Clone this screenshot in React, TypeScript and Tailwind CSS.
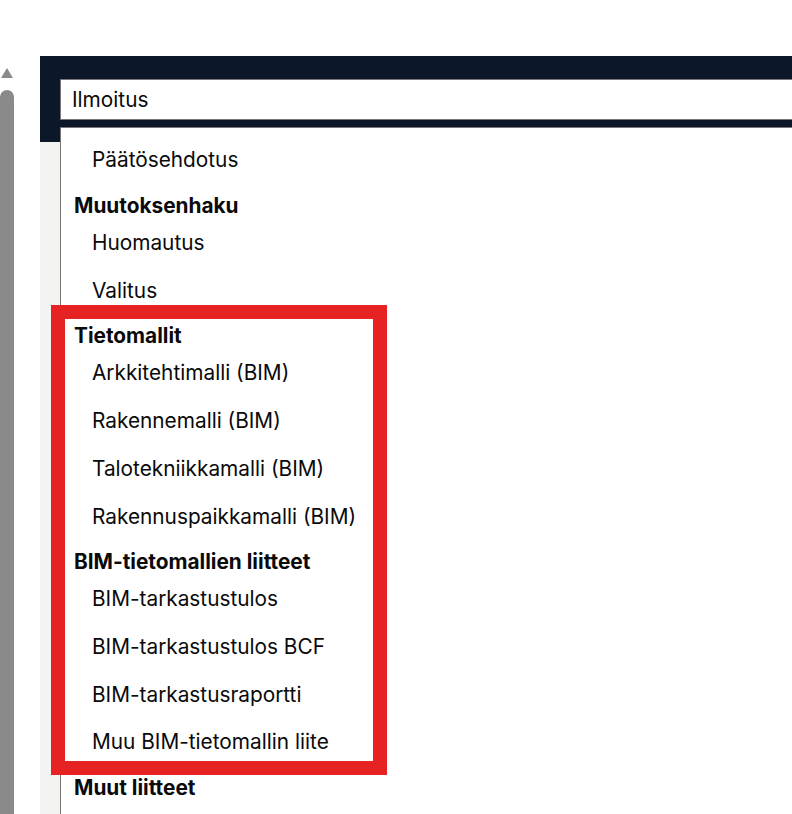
import React from "react";

type Row = { label: string; group?: boolean };

const rows: Row[] = [
  { label: "Päätösehdotus" },
  { label: "Muutoksenhaku", group: true },
  { label: "Huomautus" },
  { label: "Valitus" },
  { label: "Tietomallit", group: true },
  { label: "Arkkitehtimalli (BIM)" },
  { label: "Rakennemalli (BIM)" },
  { label: "Talotekniikkamalli (BIM)" },
  { label: "Rakennuspaikkamalli (BIM)" },
  { label: "BIM-tietomallien liitteet", group: true },
  { label: "BIM-tarkastustulos" },
  { label: "BIM-tarkastustulos BCF" },
  { label: "BIM-tarkastusraportti" },
  { label: "Muu BIM-tietomallin liite" },
  { label: "Muut liitteet", group: true },
];

const App = () => {
  return (
    <div className="relative w-[792px] h-[814px] overflow-hidden bg-white font-['Inter','Liberation_Sans',sans-serif] text-[#0a0a0a]">
      <div className="flex h-full">
        {/* scrollbar */}
        <div className="w-[14px] shrink-0 h-full flex flex-col items-center pt-[68px]">
          <div className="w-0 h-0 border-l-[6px] border-r-[6px] border-b-[10px] border-l-transparent border-r-transparent border-b-[#8a8a8a]" />
          <div className="mt-[12px] w-[14px] flex-1 bg-[#8a8a8a] rounded-t-[7px]" />
        </div>
        <div className="w-[26px] shrink-0" />

        {/* main */}
        <div className="flex-1 min-w-0 flex flex-col pt-[56px]">
          <div className="h-[86px] bg-[#0c1829] pl-5 pt-[23px] overflow-hidden">
            <div className="w-[800px] h-[41px] bg-white border border-[#767676] flex items-center pl-[11px] text-[20.8px] leading-6">
              Ilmoitus
            </div>
          </div>
          <div className="flex-1 bg-[#f3f3f2]" />
        </div>
      </div>

      {/* dropdown list */}
      <div className="absolute left-[60px] top-[127px] w-[800px] h-[700px] bg-white border-l border-t border-[#767676] pt-[8.5px]">
        {rows.map((r) =>
          r.group ? (
            <div
              key={r.label}
              className="pl-[13px] pt-[9.3px] pb-[1.4px] text-[20.8px] leading-6 font-bold"
            >
              {r.label}
            </div>
          ) : (
            <div
              key={r.label}
              className="h-[47.8px] flex items-center pl-[31px] text-[20.8px] leading-6"
            >
              {r.label}
            </div>
          )
        )}
      </div>

      {/* highlight */}
      <div className="absolute left-[51px] top-[305px] w-[336px] h-[470px] border-[14px] border-[#e62222]" />
    </div>
  );
};

export default App;
